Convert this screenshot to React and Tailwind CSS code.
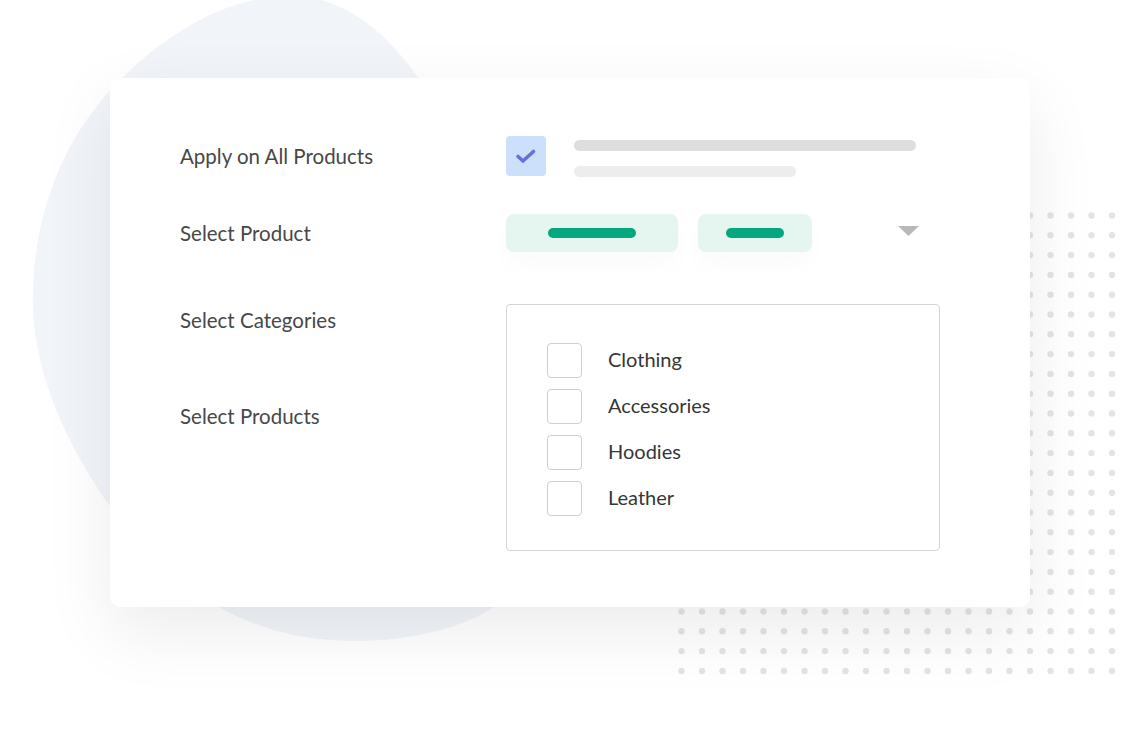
import React from 'react';

const font = { fontFamily: 'Lato, "Open Sans", sans-serif' };

function Dots() {
  const cols = 22, rows = 24;
  const dots = [];
  for (let r = 0; r < rows; r++) {
    for (let c = 0; c < cols; c++) {
      dots.push(<circle key={r + '-' + c} cx={3.5 + c * 20.5} cy={3.5 + r * 19.8} r="3.2" fill="#e4e4e4" />);
    }
  }
  return (
    <svg className="absolute left-[678px] top-[212px]" width="440" height="466" viewBox="0 0 440 466">
      {dots}
    </svg>
  );
}

function Blob() {
  return (
    <svg className="absolute left-0 top-0" width="700" height="700" viewBox="0 0 700 700">
      <path
        d="M290 -4 C350 -4 395 40 430 95 L560 400 C580 520 540 590 470 620 C420 640 370 643 330 640 C250 635 170 590 120 520 C60 440 30 360 33 290 C36 200 70 130 120 80 C170 30 230 -4 290 -4 Z"
        fill="#f1f4f8"
      />
    </svg>
  );
}

function Box() {
  return <div className="w-[35px] h-[35px] rounded-[4px] border border-[#cfcfcf] bg-white shrink-0" />;
}

export default function App() {
  const cats = ['Clothing', 'Accessories', 'Hoodies', 'Leather'];
  return (
    <div className="relative w-[1136px] h-[756px] bg-white overflow-hidden" style={font}>
      <Blob />
      <Dots />
      <div className="relative ml-[110px] mt-[78px] w-[920px] h-[529px] bg-white rounded-[10px] shadow-[0_24px_70px_rgba(0,0,0,0.08)] pl-[70px] pt-[58px]">
        {/* row 1 */}
        <div className="flex items-center h-[40px]">
          <div className="w-[326px] text-[20.5px] text-[#484848] mt-[1px]">Apply on All Products</div>
          <div className="w-[40px] h-[40px] rounded-[4px] bg-[#cce0fb] flex items-center justify-center">
            <svg width="22" height="16" viewBox="0 0 22 16">
              <path d="M3 8.5 L8 13 L18.5 3.5" fill="none" stroke="#6671d6" strokeWidth="3.6" strokeLinecap="round" strokeLinejoin="round" />
            </svg>
          </div>
          <div className="ml-[28px] mt-[5px] flex flex-col gap-[15px]">
            <div className="w-[342px] h-[11px] rounded-full bg-[#dedede]" />
            <div className="w-[222px] h-[11px] rounded-full bg-[#ededed]" />
          </div>
        </div>

        {/* row 2 */}
        <div className="flex items-center h-[38px] mt-[38px]">
          <div className="w-[326px] text-[20.5px] text-[#484848]">Select Product</div>
          <div className="w-[172px] h-[38px] rounded-[8px] bg-[#e5f6f1] flex items-center justify-center shadow-[0_14px_20px_rgba(0,0,0,0.02)]">
            <div className="w-[88px] h-[10px] rounded-full bg-[#05a87e]" />
          </div>
          <div className="ml-[20px] w-[114px] h-[38px] rounded-[8px] bg-[#e5f6f1] flex items-center justify-center shadow-[0_14px_20px_rgba(0,0,0,0.02)]">
            <div className="w-[58px] h-[10px] rounded-full bg-[#05a87e]" />
          </div>
          <svg className="ml-[86px] mt-[-4px]" width="21" height="10" viewBox="0 0 21 10">
            <path d="M0 0 L21 0 L10.5 10 Z" fill="#b8b8b8" />
          </svg>
        </div>

        {/* row 3 */}
        <div className="flex mt-[52px]">
          <div className="w-[326px] text-[20.5px] text-[#484848] flex flex-col">
            <div className="leading-[24px] mt-[4px]">Select Categories</div>
            <div className="leading-[24px] mt-[72px]">Select Products</div>
          </div>
          <div className="w-[434px] h-[247px] rounded-[4px] border border-[#d4d4d4] pl-[40px] pt-[38px] flex flex-col gap-[11px]">
            {cats.map((c) => (
              <div key={c} className="flex items-center gap-[26px]">
                <Box />
                <span className="text-[20px] text-[#363636] mt-[-3px]">{c}</span>
              </div>
            ))}
          </div>
        </div>
      </div>
    </div>
  );
}
